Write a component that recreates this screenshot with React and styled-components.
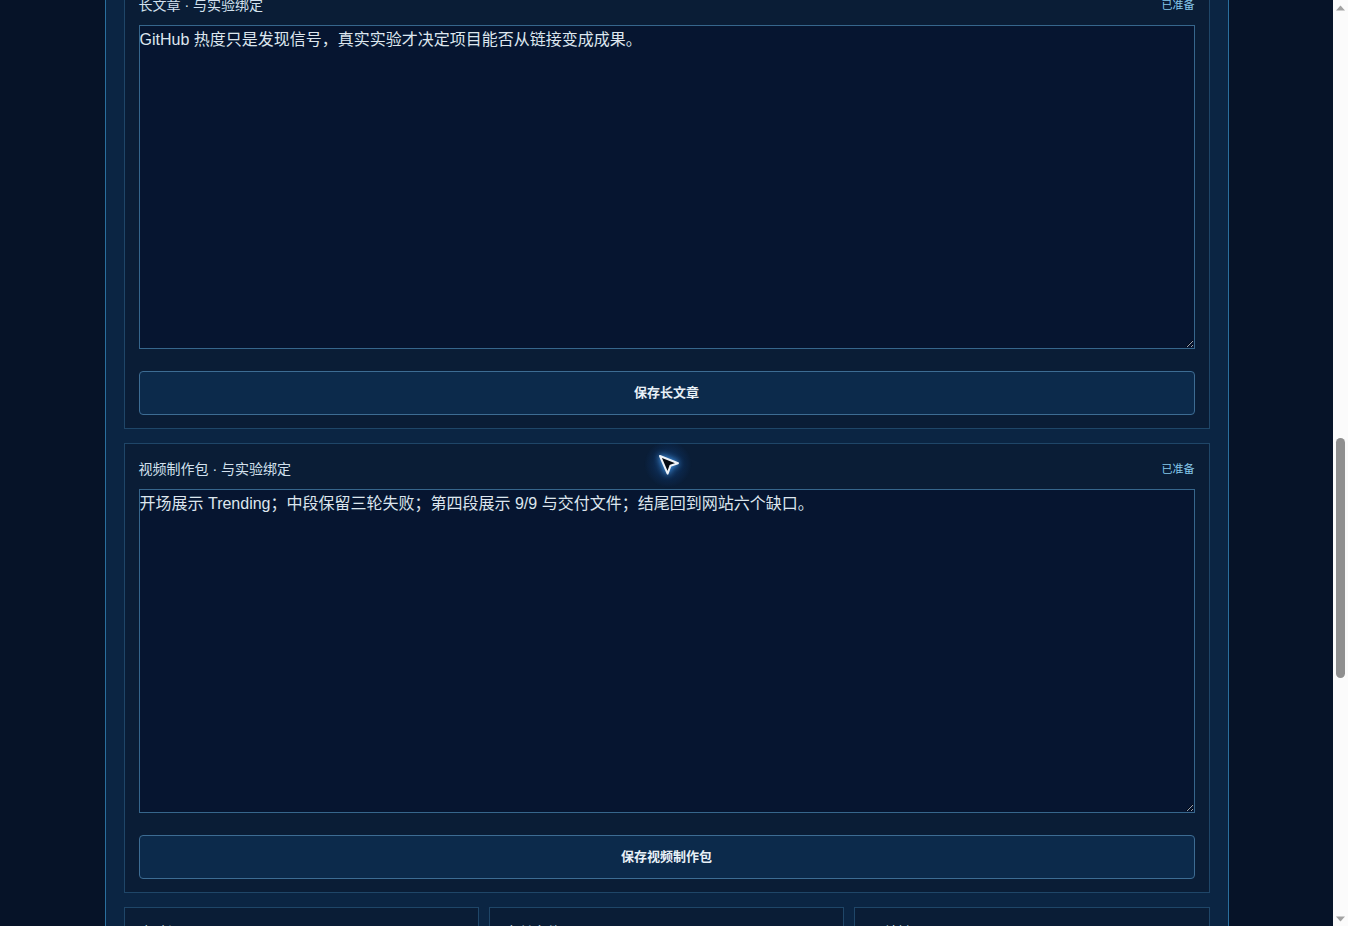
import React, { useLayoutEffect, useRef } from 'react'
import styled, { createGlobalStyle } from 'styled-components'

const GlobalStyle = createGlobalStyle`
  html, body {
    margin: 0;
    padding: 0;
    background: #061328;
    overflow: hidden;
  }
  body {
    font-family: "Liberation Sans", "Noto Sans CJK SC", sans-serif;
    color: #d4e2ee;
  }
  * {
    box-sizing: border-box;
  }
`

const Shell = styled.div`
  display: flex;
  height: 100vh;
  width: 100%;
`

const Scroller = styled.div`
  flex: 1;
  min-width: 0;
  height: 100%;
  overflow-y: auto;
  scrollbar-width: none;
  &::-webkit-scrollbar {
    display: none;
  }
`

const ScrollBar = styled.div`
  width: 15px;
  flex: 0 0 15px;
  height: 100%;
  background: #fbfbfb;
  display: flex;
  flex-direction: column;
  align-items: center;
`

const ScrollArrow = styled.div`
  height: 15px;
  width: 15px;
  display: flex;
  align-items: center;
  justify-content: center;
  svg {
    display: block;
  }
`

const Track = styled.div`
  flex: 1;
  width: 100%;
  display: flex;
  flex-direction: column;
  align-items: center;
`

const Thumb = styled.div`
  margin-top: ${(props) => props.$offset}px;
  width: 9px;
  height: ${(props) => props.$size}px;
  border-radius: 5px;
  background: #8f8f8f;
`

const Panel = styled.main`
  width: 1124px;
  margin: 0 auto;
  padding: 24px 18px 120px;
  background: #0b2543;
  border-left: 1px solid #2a6f9e;
  border-right: 1px solid #2a6f9e;
  display: flex;
  flex-direction: column;
  gap: 14px;
`

const PageTitle = styled.h1`
  margin: 0;
  padding: 20px 0 12px;
  font-size: 22px;
  font-weight: 700;
  color: #e4eef7;
`

const Card = styled.section`
  background: #0a1d36;
  border: 1px solid #1f4668;
  padding: 14px 14px 13px;
  display: flex;
  flex-direction: column;
`

const CardHead = styled.div`
  display: flex;
  align-items: center;
  justify-content: space-between;
  height: 20px;
  margin-bottom: 11px;
`

const Label = styled.span`
  font-size: 14px;
  color: #d3e1ee;
`

const Status = styled.span`
  font-size: 11px;
  color: #86c8ea;
`

const Editor = styled.textarea`
  display: block;
  width: 100%;
  height: 324px;
  margin: 0;
  padding: 2px 1px 0 0;
  background: #061530;
  border: 1px solid #36668c;
  border-radius: 0;
  color: #dde6ee;
  font-family: "Liberation Sans", "Noto Sans CJK SC", sans-serif;
  font-size: 16px;
  line-height: 23px;
  resize: vertical;
  outline: none;
  color-scheme: dark;
`

const SaveButton = styled.button`
  margin-top: 22px;
  height: 44px;
  width: 100%;
  padding: 0 0 3px;
  background: #0c2a4b;
  border: 1px solid #3d6c93;
  border-radius: 4px;
  color: #e8f0f7;
  font-family: "Liberation Sans", "Noto Sans CJK SC", sans-serif;
  font-size: 13px;
  font-weight: 700;
  cursor: pointer;
`

const Row = styled.div`
  display: grid;
  grid-template-columns: repeat(3, 1fr);
  gap: 10px;
`

const SmallCard = styled.section`
  background: #0a1d36;
  border: 1px solid #1f4668;
  padding: 13px 15px 18px;
  min-height: 220px;
`

const SmallTitle = styled.div`
  font-size: 14px;
  color: #d3e1ee;
  margin-bottom: 12px;
`

const SmallText = styled.p`
  margin: 0 0 8px;
  font-size: 13px;
  line-height: 20px;
  color: #9fb6ca;
`

const Glow = styled.div`
  position: fixed;
  left: 644px;
  top: 440px;
  width: 48px;
  height: 48px;
  border-radius: 50%;
  background: radial-gradient(circle, rgba(40, 120, 210, 0.45) 0%, rgba(20, 80, 160, 0.18) 45%, rgba(10, 40, 90, 0) 70%);
  pointer-events: none;
`

const Pointer = styled.svg`
  position: fixed;
  left: 657px;
  top: 453px;
  width: 24px;
  height: 24px;
  pointer-events: none;
  filter: drop-shadow(0 0 3px rgba(80, 170, 255, 0.95));
`

const drafts = [
  { label: '短帖 · 与实验绑定', text: '一条 Trending 链接不等于一个能跑的项目。' },
  { label: '推文串 · 与实验绑定', text: '三轮失败，第四轮 9/9 通过。' },
  { label: '长文章 · 与实验绑定', text: 'GitHub 热度只是发现信号，真实实验才决定项目能否从链接变成成果。', button: '保存长文章', anchor: true },
  { label: '视频制作包 · 与实验绑定', text: '开场展示 Trending；中段保留三轮失败；第四段展示 9/9 与交付文件；结尾回到网站六个缺口。', button: '保存视频制作包' },
]

const notes = [
  { title: '实验记录', lines: ['第 1 轮：依赖安装失败', '第 2 轮：配置缺失', '第 3 轮：测试未通过'] },
  { title: '交付文件', lines: ['README.md', 'run.sh', 'report.json'] },
  { title: '网站缺口', lines: ['文档入口', '示例数据', '部署说明'] },
]

export default function App() {
  const scrollRef = useRef(null)
  const anchorRef = useRef(null)

  useLayoutEffect(() => {
    const box = scrollRef.current
    const el = anchorRef.current
    if (!box || !el) return
    const top = el.getBoundingClientRect().top - box.getBoundingClientRect().top + box.scrollTop
    box.scrollTop = top + 21
  }, [])

  return (
    <>
      <GlobalStyle />
      <Shell>
        <Scroller ref={scrollRef}>
          <Panel>
            <PageTitle>内容工作台</PageTitle>
            {drafts.map((d) => (
              <Card key={d.label} ref={d.anchor ? anchorRef : null}>
                <CardHead>
                  <Label>{d.label}</Label>
                  <Status>已准备</Status>
                </CardHead>
                <Editor defaultValue={d.text} spellCheck={false} />
                <SaveButton>{d.button || '保存'}</SaveButton>
              </Card>
            ))}
            <Row>
              {notes.map((n) => (
                <SmallCard key={n.title}>
                  <SmallTitle>{n.title}</SmallTitle>
                  {n.lines.map((l) => (
                    <SmallText key={l}>{l}</SmallText>
                  ))}
                </SmallCard>
              ))}
            </Row>
          </Panel>
        </Scroller>
        <ScrollBar>
          <ScrollArrow>
            <svg width="9" height="6" viewBox="0 0 9 6">
              <path d="M0 5.5 L4.5 0.5 L9 5.5 Z" fill="#a3a3a3" />
            </svg>
          </ScrollArrow>
          <Track>
            <Thumb $offset={423} $size={240} />
          </Track>
          <ScrollArrow>
            <svg width="9" height="6" viewBox="0 0 9 6">
              <path d="M0 0.5 L4.5 5.5 L9 0.5 Z" fill="#a3a3a3" />
            </svg>
          </ScrollArrow>
        </ScrollBar>
      </Shell>
      <Glow />
      <Pointer viewBox="0 0 24 24">
        <path
          d="M3 3 L21 10.2 L13.4 12.8 L10.6 20.6 Z"
          fill="#050a12"
          stroke="#eef3f8"
          strokeWidth="2"
          strokeLinejoin="round"
        />
      </Pointer>
    </>
  )
}
